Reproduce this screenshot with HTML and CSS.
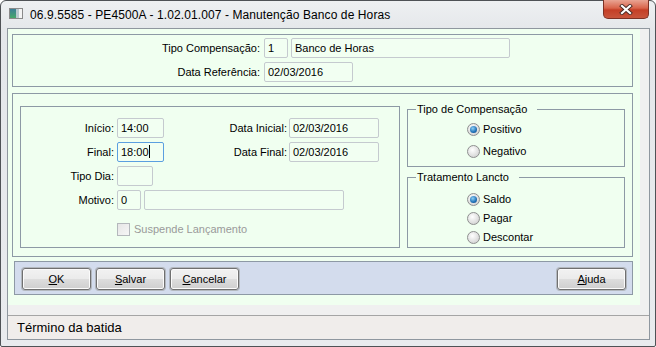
FILE: index.html
```html
<!DOCTYPE html>
<html lang="pt">
<head>
    <meta charset="UTF-8">
    <title>Manutenção Banco de Horas</title>
    <link rel="stylesheet" href="styles.css">
</head>
<body>
    <div class="window">
        <div class="titlebar">
            <svg class="app-icon" width="14" height="11" viewBox="0 0 14 11">
                <defs>
                    <linearGradient id="ic" x1="0" y1="0" x2="0" y2="1">
                        <stop offset="0" stop-color="#3d7f96"/>
                        <stop offset="1" stop-color="#46a86a"/>
                    </linearGradient>
                </defs>
                <rect x="0.5" y="0.5" width="13" height="10" fill="#f4f4f4" stroke="#8a8a8a"/>
                <rect x="1" y="1" width="6" height="9" fill="url(#ic)"/>
                <rect x="7" y="1" width="3" height="9" fill="#b9c9cf"/>
            </svg>
            <span class="title">06.9.5585 - PE4500A - 1.02.01.007 - Manutenção Banco de Horas</span>
            <div class="close">
                <svg width="14" height="11" viewBox="0 0 14 11">
                    <path d="M3 2 L11 9 M11 2 L3 9" stroke="#4a2a24" stroke-width="4" stroke-linecap="square"/>
                    <path d="M3 2 L11 9 M11 2 L3 9" stroke="#ffffff" stroke-width="2.2" stroke-linecap="square"/>
                </svg>
            </div>
        </div>

        <div class="client">
            <div class="form-area">
                <div class="panel panel-top">
                    <div class="row">
                        <span class="lbl lbl-top">Tipo Compensação:</span>
                        <div class="field w24">1</div>
                        <div class="field w219 gap-l">Banco de Horas</div>
                    </div>
                    <div class="row">
                        <span class="lbl lbl-top">Data Referência:</span>
                        <div class="field w89">02/03/2016</div>
                    </div>
                </div>

                <div class="panel panel-main">
                    <div class="box">
                        <div class="row">
                            <span class="lbl lbl-a">Início:</span>
                            <div class="field w47">14:00</div>
                            <span class="lbl lbl-b">Data Inicial:</span>
                            <div class="field w90">02/03/2016</div>
                        </div>
                        <div class="row">
                            <span class="lbl lbl-a">Final:</span>
                            <div class="field w47 focused">18:00<span class="caret"></span></div>
                            <span class="lbl lbl-b">Data Final:</span>
                            <div class="field w90">02/03/2016</div>
                        </div>
                        <div class="row">
                            <span class="lbl lbl-a">Tipo Dia:</span>
                            <div class="field w36"></div>
                        </div>
                        <div class="row">
                            <span class="lbl lbl-a">Motivo:</span>
                            <div class="field w24">0</div>
                            <div class="field w200 gap-l"></div>
                        </div>
                        <div class="row check-row">
                            <span class="checkbox"></span>
                            <span class="disabled">Suspende Lançamento</span>
                        </div>
                    </div>

                    <div class="side">
                        <fieldset class="group group-tipo">
                            <legend>Tipo de Compensação</legend>
                            <div class="radio-row"><span class="radio checked"></span>Positivo</div>
                            <div class="radio-row"><span class="radio"></span>Negativo</div>
                        </fieldset>
                        <fieldset class="group group-trat">
                            <legend>Tratamento Lancto</legend>
                            <div class="radio-row"><span class="radio checked"></span>Saldo</div>
                            <div class="radio-row"><span class="radio"></span>Pagar</div>
                            <div class="radio-row"><span class="radio"></span>Descontar</div>
                        </fieldset>
                    </div>
                </div>

                <div class="buttonbar">
                    <button class="btn"><u>O</u>K</button>
                    <button class="btn"><u>S</u>alvar</button>
                    <button class="btn"><u>C</u>ancelar</button>
                    <button class="btn btn-right"><u>A</u>juda</button>
                </div>
            </div>

            <div class="statusbar">Término da batida</div>
        </div>
    </div>
</body>
</html>
```

FILE: styles.css
```css
body {
    margin: 0;
    background-color: #ffffff;
    font-family: 'Liberation Sans', Arial, sans-serif;
}

.window {
    width: 656px;
    height: 347px;
    box-sizing: border-box;
    border: 1px solid #4f5256;
    border-radius: 6px 6px 2px 2px;
    background: linear-gradient(#eef0f2, #e4e7ea 30px, #e9ebee);
    display: flex;
    flex-direction: column;
}

.titlebar {
    height: 27px;
    display: flex;
    align-items: flex-start;
}

.app-icon {
    margin: 7px 7px 0 8px;
}

.title {
    font-size: 12px;
    line-height: 14px;
    letter-spacing: 0.1px;
    margin-top: 7px;
    color: #000;
    flex: 1;
}

.close {
    width: 46px;
    height: 19px;
    margin-top: -1px;
    margin-right: 6px;
    box-sizing: border-box;
    border: 1px solid #7d3125;
    border-top: none;
    border-radius: 0 0 5px 5px;
    background: linear-gradient(#e9a493, #d9644b 45%, #c43f27 55%, #c8553c);
    display: flex;
    align-items: center;
    justify-content: center;
}

.client {
    height: 312px;
    margin: 0 5px 0 6px;
    box-sizing: border-box;
    border: 1px solid #8f979f;
    background-color: #f0f0f0;
    display: flex;
    flex-direction: column;
}

.form-area {
    width: 632px;
    height: 276px;
    box-sizing: border-box;
    padding: 5px 0 0 4px;
    background-color: #f0fff0;
    font-size: 11px;
    color: #000;
}

.panel {
    width: 621px;
    box-sizing: border-box;
    border: 1px solid #8d99a5;
}

.panel-top {
    height: 53px;
    padding-top: 3px;
    display: flex;
    flex-direction: column;
    gap: 4px;
}

.row {
    height: 20px;
    display: flex;
    align-items: center;
}

.lbl {
    text-align: right;
    white-space: nowrap;
}

.lbl-top {
    width: 247px;
    margin-right: 4px;
}

.lbl-a {
    width: 93px;
    margin-right: 3px;
}

.lbl-b {
    width: 123px;
    margin-right: 2px;
}

.field {
    height: 20px;
    box-sizing: border-box;
    border: 1px solid #c5cacf;
    border-radius: 2px;
    padding-left: 3px;
    line-height: 18px;
    background-color: #f2fff2;
    white-space: nowrap;
}

.field.focused {
    border-color: #5b9fe0;
}

.caret {
    display: inline-block;
    width: 1px;
    height: 13px;
    background-color: #000;
    vertical-align: -2px;
}

.gap-l {
    margin-left: 3px;
}

.w24 { width: 24px; }
.w36 { width: 36px; }
.w47 { width: 47px; }
.w89 { width: 89px; }
.w90 { width: 90px; }
.w200 { width: 200px; }
.w219 { width: 219px; }

.panel-main {
    height: 164px;
    margin-top: 6px;
    padding: 9px 0 0 7px;
    display: flex;
    gap: 7px;
}

.box {
    width: 380px;
    height: 142px;
    margin-top: 3px;
    box-sizing: border-box;
    border: 1px solid #8d99a5;
    padding-top: 11px;
    display: flex;
    flex-direction: column;
    gap: 4px;
}

.check-row {
    margin-top: 5px;
    padding-left: 96px;
}

.checkbox {
    width: 13px;
    height: 13px;
    box-sizing: border-box;
    border: 1px solid #b4b8bc;
    background: linear-gradient(135deg, #e6e6e6, #f6f6f6);
    margin-right: 4px;
}

.disabled {
    color: #9a9a9a;
}

.side {
    width: 218px;
    display: flex;
    flex-direction: column;
    gap: 4px;
}

.group {
    margin: 0;
    padding: 0;
    border: 1px solid #8d99a5;
    min-width: 0;
}

.group legend {
    margin-left: 8px;
    padding: 0 10px 0 1px;
    line-height: 13px;
}

.group-tipo {
    height: 64px;
    box-sizing: border-box;
    padding-top: 3px;
}

.group-tipo .radio-row {
    height: 20px;
    margin-bottom: 2px;
}

.group-trat {
    height: 77px;
    box-sizing: border-box;
    padding-top: 6px;
}

.group-trat .radio-row {
    height: 18px;
    margin-bottom: 1px;
}

.radio-row {
    display: flex;
    align-items: center;
    padding-left: 59px;
}

.radio {
    width: 13px;
    height: 13px;
    box-sizing: border-box;
    border-radius: 50%;
    border: 1px solid #8e8f8f;
    background: radial-gradient(circle at 40% 35%, #ffffff, #d9d9d9 70%, #c4c4c4);
    margin-right: 3px;
    display: flex;
    align-items: center;
    justify-content: center;
}

.radio.checked::after {
    content: "";
    width: 7px;
    height: 7px;
    border-radius: 50%;
    background: radial-gradient(circle at 40% 35%, #8fd0f5, #1f70b6 60%, #0f3f78);
}

.buttonbar {
    width: 619px;
    height: 34px;
    margin: 4px 0 0 2px;
    box-sizing: border-box;
    border: 1px solid #8d99a5;
    background-color: #d3dced;
    padding: 6px 6px 0 7px;
    display: flex;
    align-items: flex-start;
    gap: 5px;
}

.btn {
    width: 69px;
    height: 22px;
    padding: 0;
    font-family: 'Liberation Sans', Arial, sans-serif;
    font-size: 11px;
    color: #000;
    border: 1px solid #707070;
    border-radius: 3px;
    box-shadow: 0 0 0 1px #b3b8be, inset 0 0 0 1px #fbfbfb;
    background: linear-gradient(#f2f2f2, #ebebeb 48%, #dddddd 52%, #cfcfcf);
}

.btn-right {
    margin-left: auto;
}

.statusbar {
    height: 24px;
    margin-top: 10px;
    box-sizing: border-box;
    border-top: 1px solid #a5a5a5;
    background-color: #f0edeb;
    padding-left: 9px;
    font-size: 13px;
    line-height: 23px;
    color: #000;
}
```
